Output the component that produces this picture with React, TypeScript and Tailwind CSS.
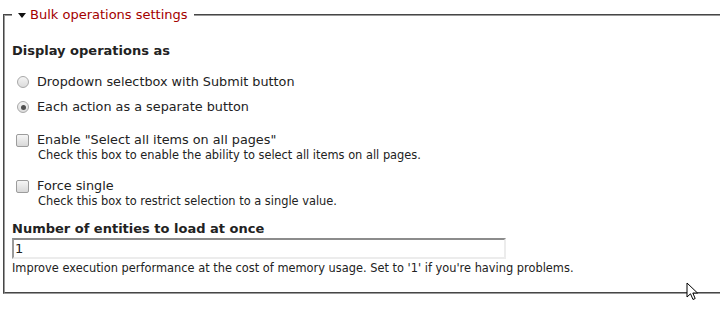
import React from 'react';

function Radio({ checked }: { checked?: boolean }) {
  return (
    <span className="relative inline-flex h-[12px] w-[12px] shrink-0 items-center justify-center rounded-full border border-[#a8a8a8] bg-gradient-to-b from-[#f4f4f4] to-[#dcdcdc]">
      {checked && <span className="h-[5px] w-[5px] rounded-full bg-[#505050]" />}
    </span>
  );
}

function Checkbox() {
  return (
    <span className="inline-block h-[13px] w-[13px] shrink-0 rounded-[2px] border border-[#9c9c9c] bg-gradient-to-b from-[#f6f6f6] to-[#d8d8d8]" />
  );
}

function Cursor() {
  return (
    <svg className="absolute left-[686px] top-[282px]" width="14" height="20" viewBox="0 0 14 20">
      <path
        d="M1 1 L1 15 L4.5 11.8 L7 17.5 L9.2 16.5 L6.8 11 L11.5 11 Z"
        fill="#fff"
        stroke="#000"
        strokeWidth="1"
        strokeLinejoin="round"
      />
    </svg>
  );
}

export default function App() {
  return (
    <div className="relative h-[311px] w-[720px] overflow-hidden bg-white font-['DejaVu_Sans',sans-serif] text-[#222]">
      <fieldset className="ml-[3px] mt-[7px] w-[740px] border-2 border-[#9a9a9a] px-[7px] pb-[16px] [border-style:groove]">
        <legend className="flex items-center gap-[4px] px-[6px] text-[13px] leading-[16px] text-[#a40000]">
          <svg width="8" height="6" viewBox="0 0 8 6" className="mt-[1px]">
            <path d="M0 0 L8 0 L4 5 Z" fill="#111" />
          </svg>
          Bulk operations settings
        </legend>

        <div className="pt-[19px]">
          <h3 className="text-[13px] font-bold leading-[17px]">Display operations as</h3>

          <div className="mt-[15px] flex flex-col gap-[9px] pl-[5px]">
            <label className="flex items-center gap-[8px] text-[12.8px] leading-[16px]">
              <Radio />
              Dropdown selectbox with Submit button
            </label>
            <label className="flex items-center gap-[8px] text-[12.8px] leading-[16px]">
              <Radio checked />
              Each action as a separate button
            </label>
          </div>

          <div className="mt-[17px] pl-[4px]">
            <label className="flex items-center gap-[8px] text-[12.8px] leading-[16px]">
              <Checkbox />
              Enable "Select all items on all pages"
            </label>
            <p className="pl-[22px] text-[11.4px] leading-[15px]">
              Check this box to enable the ability to select all items on all pages.
            </p>
          </div>

          <div className="mt-[15px] pl-[4px]">
            <label className="flex items-center gap-[8px] text-[12.8px] leading-[16px]">
              <Checkbox />
              Force single
            </label>
            <p className="pl-[22px] text-[11.4px] leading-[15px]">
              Check this box to restrict selection to a single value.
            </p>
          </div>

          <div className="mt-[11px]">
            <h3 className="text-[13px] font-bold leading-[17px]">Number of entities to load at once</h3>
            <input
              type="text"
              defaultValue="1"
              className="mt-[1px] block h-[21px] w-[494px] border-2 border-b-[#ececec] border-l-[#9a9a9a] border-r-[#ececec] border-t-[#8c8c8c] px-[1px] text-[13px] text-[#222] outline-none"
            />
            <p className="mt-[2px] text-[11.4px] leading-[15px]">
              Improve execution performance at the cost of memory usage. Set to '1' if you're having problems.
            </p>
          </div>
        </div>
      </fieldset>
      <Cursor />
    </div>
  );
}
